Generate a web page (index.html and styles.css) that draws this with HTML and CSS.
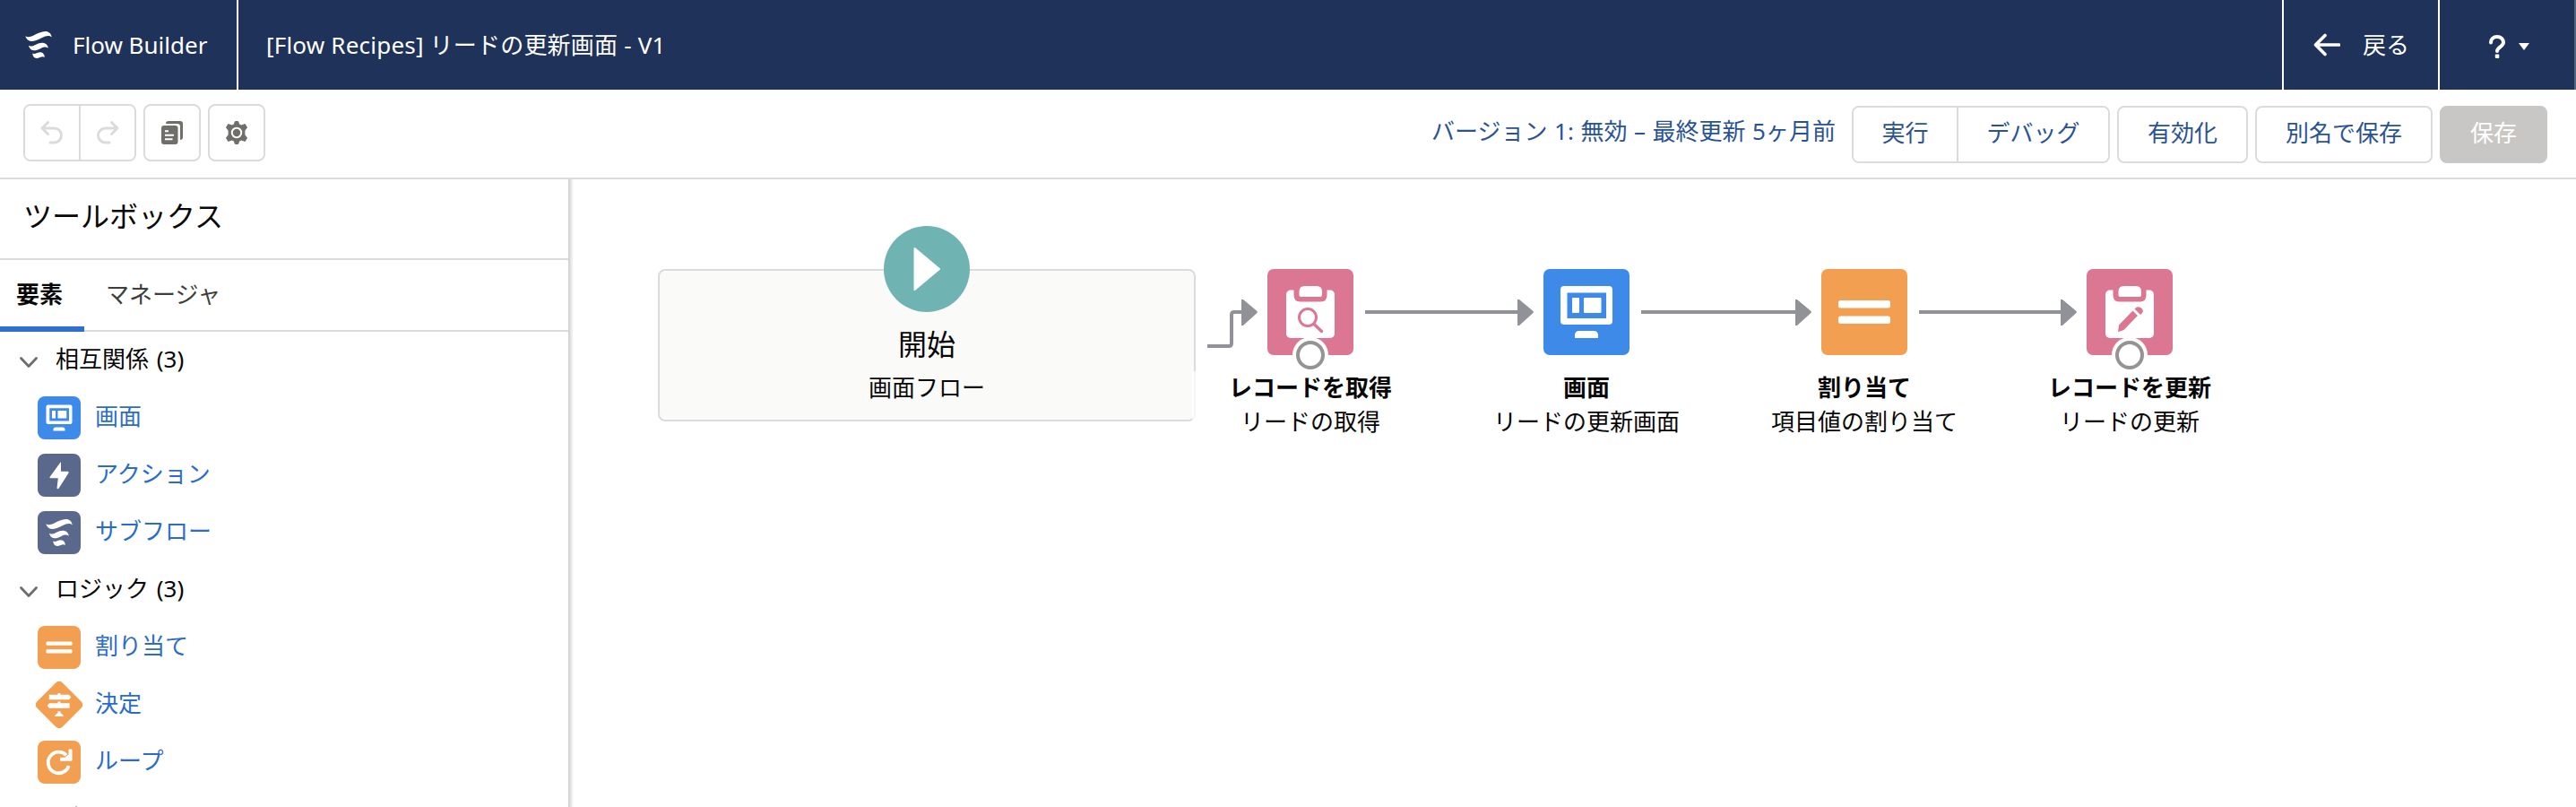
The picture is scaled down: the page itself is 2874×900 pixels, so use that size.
FILE: index.html
```html
<!DOCTYPE html>
<html lang="ja">
<head>
<meta charset="utf-8">
<title>Flow Builder</title>
<link rel="stylesheet" href="styles.css">
</head>
<body>
<svg width="0" height="0" class="defs">
  <symbol id="flow" viewBox="0 0 30 30">
    <path d="M.3 5.2C2.500 6.800 5.500 6.600 9.500 4.600 14 2.200 18 0 22.500 0 26.500 0 29 2.300 29.700 6.500 27 4.300 23.500 4.600 19 7 14 9.800 10.500 11 7 11 3.500 10.800 1.300 8.500.3 5.200zM4 15.800C6 17 8 16.600 11.500 14.900 15 13.200 17.500 12.400 20 12.700 23.500 13.200 25.500 15.500 25.800 18.700 23.500 17 21 17.300 17.500 18.900 14.500 20.300 12 21.300 9.500 21.200 6.500 21 4.500 18.800 4 15.800zM8.300 24.600C10 25.300 11.300 25 13.300 24 15.500 23 18 22.800 19.500 24 21 25.200 21.700 26.800 21.800 28.800 20 27.800 18.500 28 16.500 29 14.500 30 12.500 30.300 11 29.600 9.300 28.700 8.300 26.800 8.300 24.600z" fill="#fff"/>
  </symbol>
  <symbol id="screen" viewBox="0 0 96 96">
    <rect x="19" y="19" width="58" height="43" rx="4" fill="#fff"/>
    <path d="M26.500 26.500h43.500v28.500H26.500z" fill="#3e8ae8"/>
    <rect x="32" y="32" width="8" height="17" rx="1" fill="#fff"/>
    <rect x="45" y="32" width="19.500" height="17" rx="1" fill="#fff"/>
    <path d="M35 77v-3q0-5 5-5h16q5 0 5 5v3z" fill="#fff"/>
  </symbol>
  <symbol id="equal" viewBox="0 0 96 96">
    <rect x="19" y="35" width="58" height="8.500" rx="2.500" fill="#fff"/>
    <rect x="19" y="52.500" width="58" height="8.500" rx="2.500" fill="#fff"/>
  </symbol>
  <symbol id="clip" viewBox="0 0 96 96">
    <rect x="21" y="23.500" width="54" height="53.500" rx="5" fill="#fff"/>
    <path d="M29.500 23h37v6q0 7.500-7 7.500h-23q-7 0-7-7.500z" fill="#dc7793"/>
    <path d="M35.500 29v-4q0-6 6-6h13.500q6 0 6 6v4q0 2-2 2H37.500q-2 0-2-2z" fill="#fff"/>
  </symbol>
</svg>
<header class="top">
  <div class="brand"><svg width="30" height="30"><use href="#flow"/></svg><span class="brand-name">Flow Builder</span></div>
  <div class="title"><span class="flow-name">[Flow Recipes] リードの更新画面 - V1</span></div>
  <div class="back"><svg width="30" height="26" viewBox="0 0 30 26"><path d="M13 2.500 2.500 13 13 23.500M3 13h25.500" fill="none" stroke="#fff" stroke-width="3.600" stroke-linecap="round" stroke-linejoin="round"/></svg><span>戻る</span></div>
  <div class="help"><svg width="46" height="26" viewBox="0 0 46 26"><path d="M2 8.500C2 4.500 5 2 9 2s7 2.800 7 6.300c0 4.700-7 5.200-7 9.700" fill="none" stroke="#fff" stroke-width="4" stroke-linecap="round"/><rect x="6.800" y="21.500" width="4.500" height="4.500" rx="1" fill="#fff"/><path d="M33 9h12l-6 8z" fill="#fff"/></svg></div>
</header>
<div class="toolbar">
  <div class="group left">
    <button class="icon-btn"><svg width="26" height="26" viewBox="0 0 26 26"><path d="M8.500 1.500 2 8l6.500 6.500M3 8h12.500a8 8 0 0 1 0 16H11" fill="none" stroke="#dddbda" stroke-width="3" stroke-linecap="round" stroke-linejoin="round"/></svg></button>
    <button class="icon-btn"><svg width="26" height="26" viewBox="0 0 26 26"><path d="M17.500 1.500 24 8l-6.500 6.500M23 8H10.500a8 8 0 0 0 0 16H15" fill="none" stroke="#dddbda" stroke-width="3" stroke-linecap="round" stroke-linejoin="round"/></svg></button>
  </div>
  <button class="btn left icon-single"><svg width="26" height="26" viewBox="0 0 26 26"><path d="M6 3q0-3 3-3h13q3 0 3 3v15q0 3-3 3V6q0-3-3-3z" fill="#706e6b"/><rect x="1" y="5" width="18.500" height="21" rx="3" fill="#706e6b"/><path d="M5 11.200h4M5 15.700h10M5 20.200h8.500" stroke="#fff" stroke-width="2"/></svg></button>
  <button class="btn left icon-single"><svg width="26" height="26" viewBox="0 0 26 26"><path d="M11.300 0.500h3.400l1 3.200 2.600 1.300 4-1.500 2.200 3.600-2.600 3.700v4.400l2.600 3.700-2.200 3.600-4-1.500-2.600 1.300-1 3.200h-3.400l-1-3.200L7.700 21l-4 1.500-2.200-3.600 2.600-3.700v-4.400L1.500 7.100l2.200-3.600 4 1.500 2.600-1.300z" fill="#706e6b" stroke="#706e6b" stroke-linejoin="round"/><circle cx="13" cy="13" r="5.200" fill="#706e6b" stroke="#fff" stroke-width="2"/></svg></button>
  <span class="status">バージョン 1: 無効 – 最終更新 5ヶ月前</span>
  <div class="group right"><button class="seg run">実行</button><button class="seg debug">デバッグ</button></div>
  <button class="btn right activate">有効化</button>
  <button class="btn right save-as">別名で保存</button>
  <button class="btn right save">保存</button>
</div>
<main>
  <aside>
    <h1>ツールボックス</h1>
    <div class="tabs"><span class="tab active">要素</span><span class="tab">マネージャ</span></div>
    <div class="list">
      <div class="section"><svg class="chev" viewBox="0 0 20 12"><path d="M1.500 1.500 10 10.500l8.500-9"/></svg>相互関係 (3)</div>
      <div class="item"><svg class="tile blue"><use href="#screen"/></svg><span>画面</span></div>
      <div class="item"><svg class="tile slate" viewBox="0 0 48 48"><path d="M25.500 9.500 13.500 26q-.5 1.200 1 1.200h8.300l-1.300 11q.5 2 2 .5L34.500 21.500q.5-1.700-1-1.700H26V10q0-1-.5-.5z" fill="#fff"/></svg><span>アクション</span></div>
      <div class="item"><svg class="tile slate" viewBox="0 0 48 48"><use href="#flow" x="9" y="9" width="30" height="30"/></svg><span>サブフロー</span></div>
      <div class="section"><svg class="chev" viewBox="0 0 20 12"><path d="M1.500 1.500 10 10.500l8.500-9"/></svg>ロジック (3)</div>
      <div class="item"><svg class="tile orange"><use href="#equal"/></svg><span>割り当て</span></div>
      <div class="item"><svg class="tile diamond" viewBox="-4 -4 56 56"><rect x="4" y="4" width="40" height="40" rx="5" transform="rotate(45 24 24)" fill="#f29f51"/><path d="M22.500 11h3v1.800H35l2.300 2.700-2.300 2.700H12.800v-5.400h9.700zM22.500 20.500h3v1.800h10.200v5.400H13L10.700 25l2.300-2.700h9.500zM22.500 31.200h3v2q3 1.300 3.500 3.800H19q.5-2.500 3.500-3.800z" fill="#fff"/></svg><span>決定</span></div>
      <div class="item"><svg class="tile orange" viewBox="0 0 48 48"><path d="M34.700 28.200A11.800 11.800 0 1 1 32 16.200" fill="none" stroke="#fff" stroke-width="3.800"/><path d="M34.500 10.500q0-1 1-1h2q1 0 1 1v11.200q0 1-1 1H26q-1 0-1-1v-2q0-1 1-1h4.300l4.200-3.300z" fill="#fff"/></svg><span>ループ</span></div>
      <div class="section">データ</div>
    </div>
  </aside>
  <section class="canvas">
    <div class="start"><svg class="play" viewBox="0 0 96 96"><circle cx="48" cy="48" r="48" fill="#70b3b3"/><path d="M34.500 25 62 48 34.500 71z" fill="#fff" stroke="#fff" stroke-width="2" stroke-linejoin="round"/></svg><div class="start-title">開始</div><div class="start-sub">画面フロー</div></div>
    <svg class="wires" width="2236" height="700" viewBox="638 200 2236 700">
      <g fill="none" stroke="#919297" stroke-width="4"><path d="M1347 386h24q3 0 3-3v-32q0-3 3-3h9M1523 348h171M1831 348h173M2141 348h159"/></g>
      <g fill="#919297"><path id="head" d="M1385 334h2l15.500 13q.8 1 0 2L1387 363h-2z"/><use href="#head" x="308"/><use href="#head" x="618"/><use href="#head" x="914"/></g>
    </svg>
    <div class="node n1"><svg class="nicon pink" viewBox="0 0 96 96"><use href="#clip"/><circle cx="45" cy="54" r="9.500" fill="none" stroke="#dc7793" stroke-width="3"/><path d="m52 61.500 8.500 8" stroke="#dc7793" stroke-width="3.500" stroke-linecap="round"/></svg><i class="port"></i><b>レコードを取得</b><span>リードの取得</span></div>
    <div class="node n2"><svg class="nicon blue"><use href="#screen"/></svg><b>画面</b><span>リードの更新画面</span></div>
    <div class="node n3"><svg class="nicon orange"><use href="#equal"/></svg><b>割り当て</b><span>項目値の割り当て</span></div>
    <div class="node n4"><svg class="nicon pink" viewBox="0 0 96 96"><use href="#clip"/><path d="m36 62.500 15.500-16 5.500 5.500-15.500 16-6.500 2.200zM53.500 44.500l2.500-2q3-1.200 5.500 1.500t.5 5l-2 2z" fill="#dc7793"/></svg><i class="port"></i><b>レコードを更新</b><span>リードの更新</span></div>
  </section>
</main>
</body>
</html>
```
FILE: styles.css
```css
* { box-sizing: border-box; }
body { margin: 0; width: 2874px; height: 900px; overflow: hidden; background: #fff; color: #080707; font: 26px/38px "Noto Sans", "Noto Sans CJK JP", sans-serif; }
.defs { position: absolute; }
svg { display: block; flex: none; }
.top { display: flex; height: 100px; background: #1f3259; color: #fff; border-right: 2px solid #56647f; }
.top > div { display: flex; align-items: center; }
.brand { width: 266px; padding-left: 28px; gap: 23px; border-right: 2px solid #fff; }
.brand-name, .flow-name { white-space: nowrap; }
.flow-name { letter-spacing: .2px; }
.title { flex: 1; padding-left: 31px; }
.back { width: 176px; border: solid #fff; border-width: 0 2px; padding-left: 33px; gap: 25px; }
.help { width: 150px; padding: 4px 0 0 55px; }
.toolbar { display: flex; height: 100px; padding: 16px 32px 0 26px; border-bottom: 2px solid #dddbda; align-items: flex-start; }
button { font: inherit; color: #2a5394; background: #fff; padding: 0 0 4px; border: 0; }
.btn, .group { height: 64px; border: 2px solid #dddbda; border-radius: 8px; overflow: hidden; flex: none; }
.group { display: flex; }
.group button + button { border-left: 2px solid #dddbda; }
.group .icon-btn { width: 60px; flex: none; display: grid; place-items: center; padding: 0; }
.group .icon-btn + .icon-btn { width: 62px; }
.group.left { width: 126px; margin-right: 8px; }
.icon-single { width: 64px; margin-right: 8px; display: grid; place-items: center; padding: 0; }
.right { margin-top: 2px; }
.status { margin: 11px 18px 0 auto; color: #2a5394; white-space: nowrap; word-spacing: .8px; }
.group.right { width: 288px; margin-right: 8px; }
.run { width: 115px; }
.debug { flex: 1; }
.activate { width: 146px; margin-right: 8px; }
.save-as { width: 198px; margin-right: 8px; }
.save { width: 120px; background: #c9c7c5; border-color: #c9c7c5; color: #fff; }
main { display: flex; height: 700px; }
aside { width: 634px; height: 700px; overflow: hidden; display: flex; flex-direction: column; flex: none; }
h1 { margin: 0; height: 90px; flex: none; padding: 17px 0 0 26px; border-bottom: 2px solid #dddbda; font-size: 32px; line-height: 48px; font-weight: 400; }
.tabs { height: 80px; flex: none; display: flex; border-bottom: 2px solid #dddbda; line-height: 76px; }
.tab { color: #3e3e3c; padding: 0 24px; }
.tab.active { color: #080707; font-weight: 700; width: 94px; height: 80px; padding: 0 0 0 18px; border-bottom: 6px solid #2f6fce; }
.list { display: flex; flex-direction: column; }
.section { height: 64px; flex: none; display: flex; align-items: center; padding: 0 0 5px 62px; position: relative; word-spacing: 2px; }
.chev { position: absolute; left: 22px; top: 28px; width: 20px; height: 12px; fill: none; stroke: #706e6b; stroke-width: 2.800; stroke-linecap: round; stroke-linejoin: round; }
.item { height: 64px; flex: none; display: flex; align-items: center; padding-left: 42px; gap: 16px; color: #2b6ccb; }
.item span { padding-bottom: 4px; }
.tile { width: 48px; height: 48px; border-radius: 8px; }
.diamond { width: 56px; height: 56px; margin: 0 -4px; border-radius: 0; }
.blue { background: #3e8ae8; }
.slate { background: #5a698b; }
.orange { background: #f29f51; }
.pink { background: #dc7793; }
.canvas { position: relative; flex: 1; background: linear-gradient(to right, #cdcdcd, #fff) left / 6px 100% no-repeat; }
.start { position: absolute; left: 100px; top: 100px; width: 600px; height: 170px; border: 2px solid #dddbda; border-radius: 8px; background: #fafaf9; text-align: center; padding-top: 59px; }
.play { position: absolute; left: 250px; top: -50px; width: 96px; height: 96px; }
.start-title { font-size: 32px; line-height: 46px; }
.start-sub { line-height: 38px; margin-top: 6px; }
.wires { position: absolute; left: 4px; top: 0; }
.node { position: absolute; top: 100px; width: 264px; display: flex; flex-direction: column; align-items: center; }
.node b, .node span { align-self: stretch; text-align: center; height: 38px; line-height: 36px; background: rgba(255,255,255,.75); white-space: nowrap; }
.nicon { width: 96px; height: 96px; border-radius: 7px; margin-bottom: 18px; }
.port { position: absolute; left: 112px; top: 76px; width: 40px; height: 40px; border-radius: 50%; background: #fff; }
.port::after { content: ""; position: absolute; inset: 4px; border: 4px solid #969492; border-radius: 50%; }
.n1 { left: 696px; }
.n2 { left: 1004px; }
.n3 { left: 1314px; }
.n4 { left: 1610px; }
```
